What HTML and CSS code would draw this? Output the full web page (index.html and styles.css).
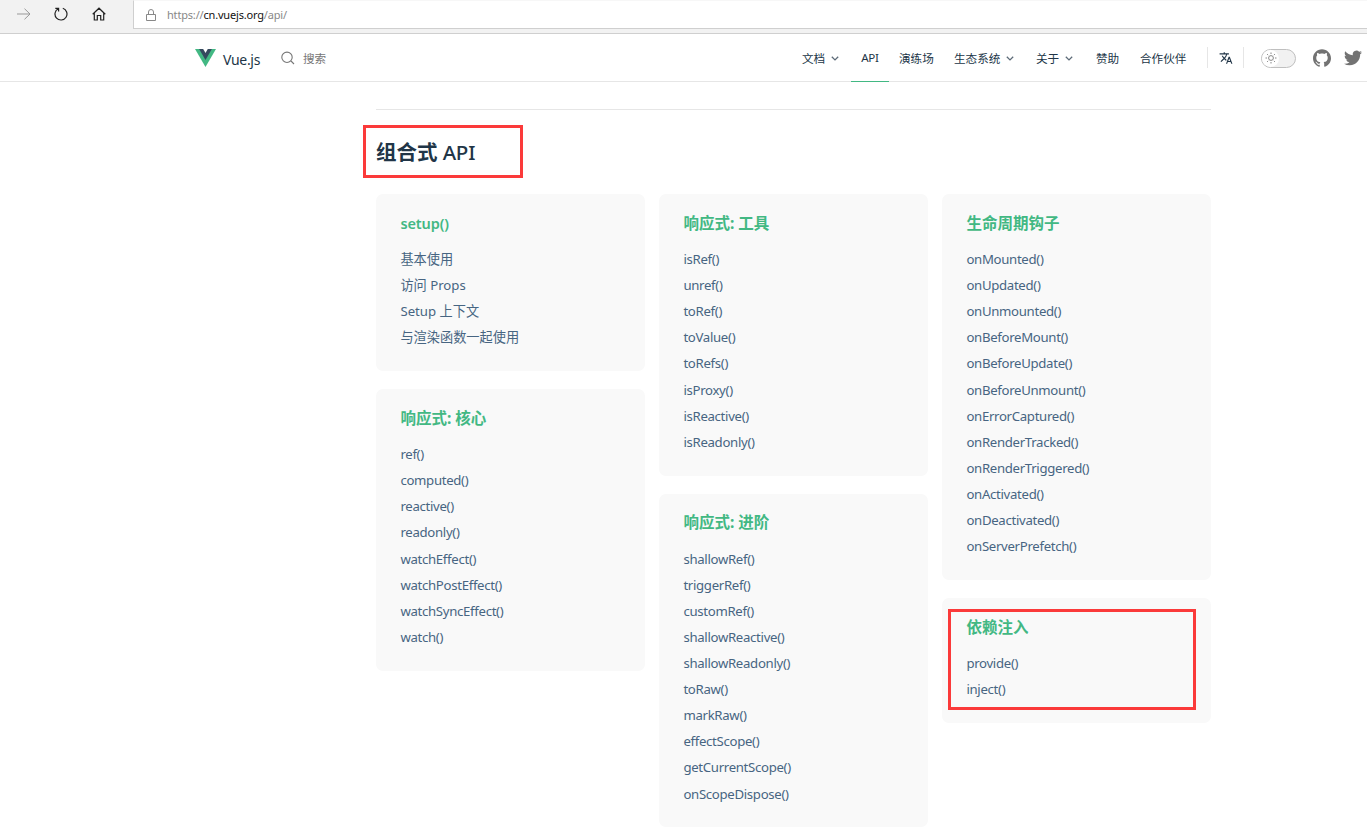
FILE: index.html
```html
<!DOCTYPE html>
<html lang="zh-CN">
  <head>
    <meta charset="UTF-8" />
    <meta name="viewport" content="width=device-width, initial-scale=1.0" />
    <title>API 参考 | Vue.js</title>
    <link rel="stylesheet" href="styles.css">
  </head>
  <body>
    <!-- browser bar -->
    <div class="browser">
      <div class="browser-buttons">
        <svg class="forward" width="14" height="12" viewBox="0 0 14 12"><path d="M0 6h13M7.500 .7 13 6l-5.500 5.300"/></svg>
        <svg class="reload" width="14" height="14" viewBox="0 0 14 14"><path d="M8.800 1.300a6 6 0 1 1-4.600.4M1.300 1.300h3.300v3.300"/></svg>
        <svg class="home" width="14" height="14" viewBox="0 0 14 14"><path d="M.7 7.200 7 1.200l6.300 6M2.300 6v7h3V8.500h3.400V13h3V6"/></svg>
      </div>
      <div class="address">
        <svg class="lock" width="10" height="12" viewBox="0 0 10 12"><path d="M.5 5.500h9v6h-9zM2.500 5.500V3a2.500 2.500 0 0 1 5 0v2.500"/></svg>
        <span class="url">https://<b>cn.vuejs.org</b>/api/</span>
      </div>
    </div>

    <header class="navbar">
      <a class="brand">
        <svg class="logo" width="21" height="18" viewBox="0 0 128 110"><path fill="#42b883" d="M0 0h128L64 110z"/><path fill="#35495e" d="M25 0h78L64 67z"/><path fill="#fff" d="M50 0h28L64 24z"/></svg>
        <span class="brand-name">Vue.js</span>
      </a>
      <div class="search">
        <svg width="14" height="14" viewBox="0 0 14 14"><circle cx="6" cy="6.300" r="5.200"/><path d="m10 10 3 3"/></svg>
        <span>搜索</span>
      </div>
      <nav class="menu">
        <a class="menu-item docs">文档<svg class="chevron" width="8" height="5" viewBox="0 0 8 5"><path d="m.8.700 3.200 3.200L7.200.700"/></svg></a>
        <a class="menu-item api active">API</a>
        <a class="menu-item play">演练场</a>
        <a class="menu-item eco">生态系统<svg class="chevron" width="8" height="5" viewBox="0 0 8 5"><path d="m.8.700 3.200 3.200L7.200.700"/></svg></a>
        <a class="menu-item about">关于<svg class="chevron" width="8" height="5" viewBox="0 0 8 5"><path d="m.8.700 3.200 3.200L7.200.700"/></svg></a>
        <a class="menu-item sponsor">赞助</a>
        <a class="menu-item partner">合作伙伴</a>
      </nav>
      <div class="translate">
        <svg width="14" height="14" viewBox="0 0 24 24"><path d="M12.870 15.070l-2.540-2.510.03-.03A17.520 17.520 0 0 0 14.070 6H17V4h-7V2H8v2H1v2h11.170C11.500 7.920 10.440 9.750 9 11.350 8.070 10.320 7.300 9.190 6.690 8h-2c.73 1.630 1.730 3.170 2.980 4.560l-5.090 5.020L4 19l5-5 3.110 3.110.76-2.040zM18.500 10h-2L12 22h2l1.120-3h4.750L21 22h2l-4.500-12zm-2.620 7l1.620-4.330L19.120 17h-3.240z"/></svg>
      </div>
      <div class="switch">
        <div class="switch-check">
          <svg width="12" height="12" viewBox="0 0 24 24"><circle cx="12" cy="12" r="4.800"/><path d="M12 1v3M12 20v3M1 12h3M20 12h3M4.200 4.200l2.100 2.100M17.700 17.700l2.100 2.100M4.200 19.800l2.100-2.100M17.700 6.300l2.100-2.100"/></svg>
        </div>
      </div>
      <div class="social">
        <svg width="18" height="18" viewBox="0 0 24 24"><path d="M12 .297c-6.630 0-12 5.373-12 12 0 5.303 3.438 9.800 8.205 11.385.6.113.82-.258.82-.577 0-.285-.01-1.040-.015-2.040-3.338.724-4.042-1.610-4.042-1.610C4.422 18.070 3.633 17.700 3.633 17.700c-1.087-.744.084-.729.084-.729 1.205.084 1.838 1.236 1.838 1.236 1.070 1.835 2.809 1.305 3.495.998.108-.776.417-1.305.76-1.605-2.665-.3-5.466-1.332-5.466-5.930 0-1.310.465-2.380 1.235-3.220-.135-.303-.54-1.523.105-3.176 0 0 1.005-.322 3.300 1.230.96-.267 1.980-.399 3-.405 1.020.006 2.040.138 3 .405 2.280-1.552 3.285-1.230 3.285-1.230.645 1.653.24 2.873.12 3.176.765.84 1.230 1.910 1.230 3.220 0 4.610-2.805 5.625-5.475 5.920.42.360.81 1.096.81 2.220 0 1.606-.015 2.896-.015 3.286 0 .315.210.69.825.57C20.565 22.092 24 17.592 24 12.297c0-6.627-5.373-12-12-12"/></svg>
        <svg width="18" height="18" viewBox="0 0 24 24"><path d="M23.953 4.570a10 10 0 0 1-2.825.775 4.958 4.958 0 0 0 2.163-2.723c-.951.555-2.005.959-3.127 1.184a4.920 4.920 0 0 0-8.384 4.482C7.690 8.095 4.067 6.130 1.640 3.162a4.822 4.822 0 0 0-.666 2.475c0 1.710.87 3.213 2.188 4.096a4.904 4.904 0 0 1-2.228-.616v.06a4.923 4.923 0 0 0 3.946 4.827 4.996 4.996 0 0 1-2.212.085 4.936 4.936 0 0 0 4.604 3.417 9.867 9.867 0 0 1-6.102 2.105c-.39 0-.779-.023-1.170-.067a13.995 13.995 0 0 0 7.557 2.209c9.053 0 13.998-7.496 13.998-13.985 0-.21 0-.42-.015-.63A9.935 9.935 0 0 0 24 4.590z"/></svg>
      </div>
    </header>

    <main class="content">
      <h2 class="section-title"><strong>组合式</strong> API</h2>
      <div class="groups">
        <div class="column">
          <section class="card">
            <h3 class="latin">setup()</h3>
            <ul>
              <li class="zh">基本使用</li>
              <li class="zh">访问 Props</li>
              <li class="zh">Setup 上下文</li>
              <li class="zh">与渲染函数一起使用</li>
            </ul>
          </section>
          <section class="card">
            <h3>响应式: 核心</h3>
            <ul>
              <li>ref()</li>
              <li>computed()</li>
              <li>reactive()</li>
              <li>readonly()</li>
              <li>watchEffect()</li>
              <li>watchPostEffect()</li>
              <li>watchSyncEffect()</li>
              <li>watch()</li>
            </ul>
          </section>
        </div>
        <div class="column">
          <section class="card">
            <h3>响应式: 工具</h3>
            <ul>
              <li>isRef()</li>
              <li>unref()</li>
              <li>toRef()</li>
              <li>toValue()</li>
              <li>toRefs()</li>
              <li>isProxy()</li>
              <li>isReactive()</li>
              <li>isReadonly()</li>
            </ul>
          </section>
          <section class="card">
            <h3>响应式: 进阶</h3>
            <ul>
              <li>shallowRef()</li>
              <li>triggerRef()</li>
              <li>customRef()</li>
              <li>shallowReactive()</li>
              <li>shallowReadonly()</li>
              <li>toRaw()</li>
              <li>markRaw()</li>
              <li>effectScope()</li>
              <li>getCurrentScope()</li>
              <li>onScopeDispose()</li>
            </ul>
          </section>
        </div>
        <div class="column">
          <section class="card">
            <h3>生命周期钩子</h3>
            <ul>
              <li>onMounted()</li>
              <li>onUpdated()</li>
              <li>onUnmounted()</li>
              <li>onBeforeMount()</li>
              <li>onBeforeUpdate()</li>
              <li>onBeforeUnmount()</li>
              <li>onErrorCaptured()</li>
              <li>onRenderTracked()</li>
              <li>onRenderTriggered()</li>
              <li>onActivated()</li>
              <li>onDeactivated()</li>
              <li>onServerPrefetch()</li>
            </ul>
          </section>
          <section class="card marked">
            <h3>依赖注入</h3>
            <ul>
              <li>provide()</li>
              <li>inject()</li>
            </ul>
          </section>
        </div>
      </div>
    </main>
  </body>
</html>
```
FILE: styles.css
```css
*, *::after {
  box-sizing: border-box;
}
body {
  margin: 0;
  height: 828px;
  overflow: hidden;
  background: #fff;
  color: #213547;
  font-family: "Noto Sans", "Noto Sans CJK SC", sans-serif;
}
h2, h3, ul {
  margin: 0;
  padding: 0;
}
svg {
  display: block;
  flex: none;
}

/* browser bar */
.browser {
  display: flex;
  height: 34px;
  background: #f2f2f2;
  border-bottom: 1px solid #cfcfcf;
}
.browser-buttons {
  display: flex;
  align-items: center;
  width: 133px;
  height: 28px;
  padding-left: 17px;
}
.browser-buttons svg, .lock {
  fill: none;
  stroke: #222;
  stroke-width: 1.2;
}
.browser-buttons .forward {
  stroke: #999;
  stroke-width: 1;
}
.reload {
  margin-left: 23px;
}
.home {
  margin-left: 24px;
}
.address {
  display: flex;
  align-items: center;
  flex: 1;
  height: 29px;
  padding-left: 12px;
  background: #fff;
  border: 1px solid #cfcfcf;
  border-top-color: #f7f7f7;
  border-right: 0;
}
.address .lock {
  stroke: #888;
  stroke-width: 1;
}
.url {
  margin: -1px 0 0 11px;
  font-size: 11px;
  letter-spacing: -.18px;
  color: #888;
}
.url b {
  font-weight: 400;
  color: #111;
}

/* navbar */
.navbar {
  display: flex;
  align-items: center;
  height: 48px;
  padding-left: 195px;
  border-bottom: 1px solid #e6e6e6;
}
.brand {
  display: flex;
  align-items: center;
  width: 86px;
}
.brand-name {
  margin: 3px 0 0 7px;
  font-size: 14px;
  letter-spacing: -.3px;
}
.search {
  display: flex;
  align-items: center;
  width: 521px;
  font-size: 11.6px;
  color: #777;
}
.search svg {
  margin: 1px 8px 0 0;
  fill: none;
  stroke: #777;
  stroke-width: 1.1;
}
.menu {
  display: flex;
  width: 405px;
  font-size: 11.6px;
}
.menu-item {
  display: flex;
  align-items: center;
  flex: none;
  height: 48px;
}
.docs {
  width: 49px;
}
.api {
  width: 38px;
  justify-content: center;
  letter-spacing: -.3px;
}
.play {
  width: 65px;
  padding-left: 10px;
}
.eco {
  width: 82px;
}
.about {
  width: 60px;
}
.sponsor {
  width: 44px;
}
.active {
  border-bottom: 1px solid #42b883;
}
.chevron {
  margin: 1px 0 0 6px;
  fill: none;
  stroke: #5d6b78;
  stroke-width: 1.3;
}
.translate {
  display: flex;
  align-items: center;
  justify-content: center;
  flex: none;
  width: 37px;
  height: 21px;
  border: solid #e6e6e6;
  border-width: 0 1px;
  fill: #213547;
}
.switch {
  flex: none;
  width: 35px;
  height: 19px;
  margin: 1px 0 0 17px;
  border: 1px solid #bfbfbf;
  border-radius: 10px;
  background: #f1f1f1;
}
.switch-check {
  display: flex;
  align-items: center;
  justify-content: center;
  width: 17px;
  height: 17px;
  border-radius: 50%;
  background: #fff;
}
.switch-check svg {
  fill: none;
  stroke: #888;
  stroke-width: 2;
}
.social {
  display: flex;
  gap: 13px;
  margin-left: 17px;
  fill: #737373;
}

/* api index */
.content {
  width: 835px;
  margin: 27px 0 0 376px;
  border-top: 1px solid #e6e6e6;
}
.section-title {
  width: 160px;
  height: 53px;
  margin: 15px 0 16px -13px;
  padding-left: 10px;
  border: 3px solid #fb3a3a;
  font-size: 20.5px;
  font-weight: 500;
  line-height: 49px;
  letter-spacing: -.2px;
}
.section-title strong {
  letter-spacing: 0;
}
.groups {
  display: flex;
  gap: 14px;
}
.column {
  flex: 1;
}
.card {
  position: relative;
  margin-bottom: 18px;
  padding: 19.5px 24px 20.7px 24.4px;
  border-radius: 7px;
  background: #f9f9f9;
}
.card h3 {
  margin-bottom: 13.5px;
  font-size: 15.5px;
  font-weight: 700;
  line-height: 19px;
  color: #42b883;
}
.card h3.latin {
  font-size: 14.5px;
  font-weight: 600;
  line-height: 18px;
  margin-bottom: 14.5px;
  letter-spacing: -.1px;
}
.card li {
  list-style: none;
  height: 26.11px;
  font-size: 13.2px;
  line-height: 26.11px;
  letter-spacing: -.31px;
  color: #476582;
}
.card li.zh {
  letter-spacing: 0;
}
.marked::after {
  content: "";
  position: absolute;
  top: 11px;
  left: 6px;
  width: 248px;
  height: 101px;
  border: 3px solid #fb3a3a;
}
```
